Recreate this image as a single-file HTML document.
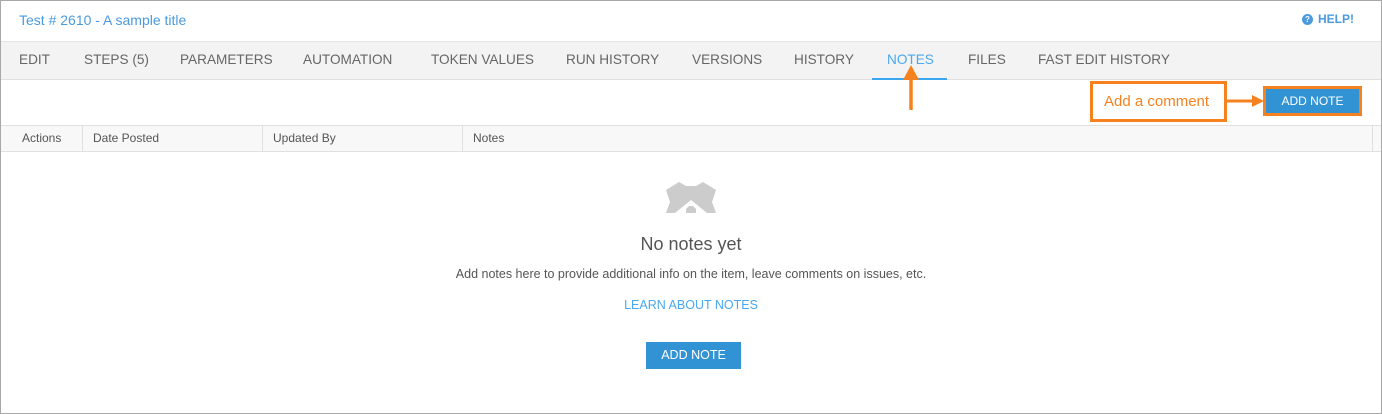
<!DOCTYPE html>
<html><head><style>
*{margin:0;padding:0;box-sizing:border-box}
body{width:1382px;height:414px;overflow:hidden;background:#fff;font-family:"Liberation Sans",sans-serif;position:relative}
.a{position:absolute;white-space:nowrap}
.tab{position:absolute;top:51px;font-size:13.6px;color:#666;line-height:18px}
.th{position:absolute;top:131px;font-size:12px;color:#555;line-height:14px}
.vl{position:absolute;top:126px;width:1px;height:25px;background:#e0e0e0}
</style></head><body>
<div class="a" style="left:0;top:0;width:1382px;height:414px;border:1px solid #a8a8a8"></div>
<div class="a" style="left:19px;top:12px;font-size:14px;color:#4a9be0">Test # 2610 - A sample title</div>
<div class="a" style="left:1302px;top:14px;width:11px;height:11px;border-radius:50%;background:#4a9be0;color:#fff;font-size:8px;font-weight:bold;text-align:center;line-height:11px">?</div>
<div class="a" style="left:1318px;top:12px;font-size:12px;color:#4a9be0;font-weight:bold">HELP!</div>
<div class="a" style="left:1px;top:41px;width:1380px;height:39px;background:#f3f3f3;border-top:1px solid #e4e4e4;border-bottom:1px solid #e0e0e0"></div>
<div class="tab" style="left:19px">EDIT</div>
<div class="tab" style="left:84px">STEPS (5)</div>
<div class="tab" style="left:180px">PARAMETERS</div>
<div class="tab" style="left:303px">AUTOMATION</div>
<div class="tab" style="left:431px">TOKEN VALUES</div>
<div class="tab" style="left:566px">RUN HISTORY</div>
<div class="tab" style="left:692px">VERSIONS</div>
<div class="tab" style="left:794px">HISTORY</div>
<div class="tab" style="left:887px;color:#4aa8f0">NOTES</div>
<div class="tab" style="left:968px">FILES</div>
<div class="tab" style="left:1038px">FAST EDIT HISTORY</div>
<div class="a" style="left:872px;top:78px;width:75px;height:2px;background:#3aa7f0"></div>
<svg class="a" style="left:900px;top:60px" width="22" height="52"><line x1="11" y1="50" x2="11" y2="14" stroke="#f5821f" stroke-width="3.5"/><polygon points="3,20 11,5 19,20" fill="#f5821f"/></svg>
<div class="a" style="left:1090px;top:81px;width:137px;height:41px;border:3px solid #f5821f;color:#f5821f;font-size:15px;line-height:35px;padding-left:11px">Add a comment</div>
<svg class="a" style="left:1226px;top:94px" width="40" height="14"><line x1="0" y1="7" x2="30" y2="7" stroke="#f5821f" stroke-width="3"/><polygon points="26,1 38,7 26,13" fill="#f5821f"/></svg>
<div class="a" style="left:1263px;top:86px;width:99px;height:30px;border:3px solid #f5821f;background:#3293d4;color:#fff;font-size:12px;text-align:center;line-height:24px">ADD NOTE</div>
<div class="a" style="left:1px;top:125px;width:1380px;height:27px;background:#f8f8f8;border-top:1px solid #e0e0e0;border-bottom:1px solid #e0e0e0"></div>
<div class="vl" style="left:82px"></div><div class="vl" style="left:262px"></div><div class="vl" style="left:462px"></div><div class="vl" style="left:1372px"></div>
<div class="th" style="left:22px">Actions</div>
<div class="th" style="left:93px">Date Posted</div>
<div class="th" style="left:273px">Updated By</div>
<div class="th" style="left:473px">Notes</div>
<svg class="a" style="left:664px;top:180px" width="54" height="34"><path d="M2,10 L15,2 L22,6 L32,6 L39,2 L52,10 L48,22 L52,33 L43,33 L27,20 L11,33 L2,33 L6,22 Z" fill="#cccccc"/><path d="M22,33 L22,29 L25,26 L29,26 L32,29 L32,33 Z" fill="#cccccc"/></svg>
<div class="a" style="left:0;width:1382px;top:234px;text-align:center;font-size:18px;color:#555">No notes yet</div>
<div class="a" style="left:0;width:1382px;top:267px;text-align:center;font-size:12.5px;color:#555">Add notes here to provide additional info on the item, leave comments on issues, etc.</div>
<div class="a" style="left:0;width:1382px;top:298px;text-align:center;font-size:12.5px;color:#4aa8f0">LEARN ABOUT NOTES</div>
<div class="a" style="left:646px;top:342px;width:95px;height:27px;background:#3293d4;color:#fff;font-size:12.5px;text-align:center;line-height:27px">ADD NOTE</div>
</body></html>
